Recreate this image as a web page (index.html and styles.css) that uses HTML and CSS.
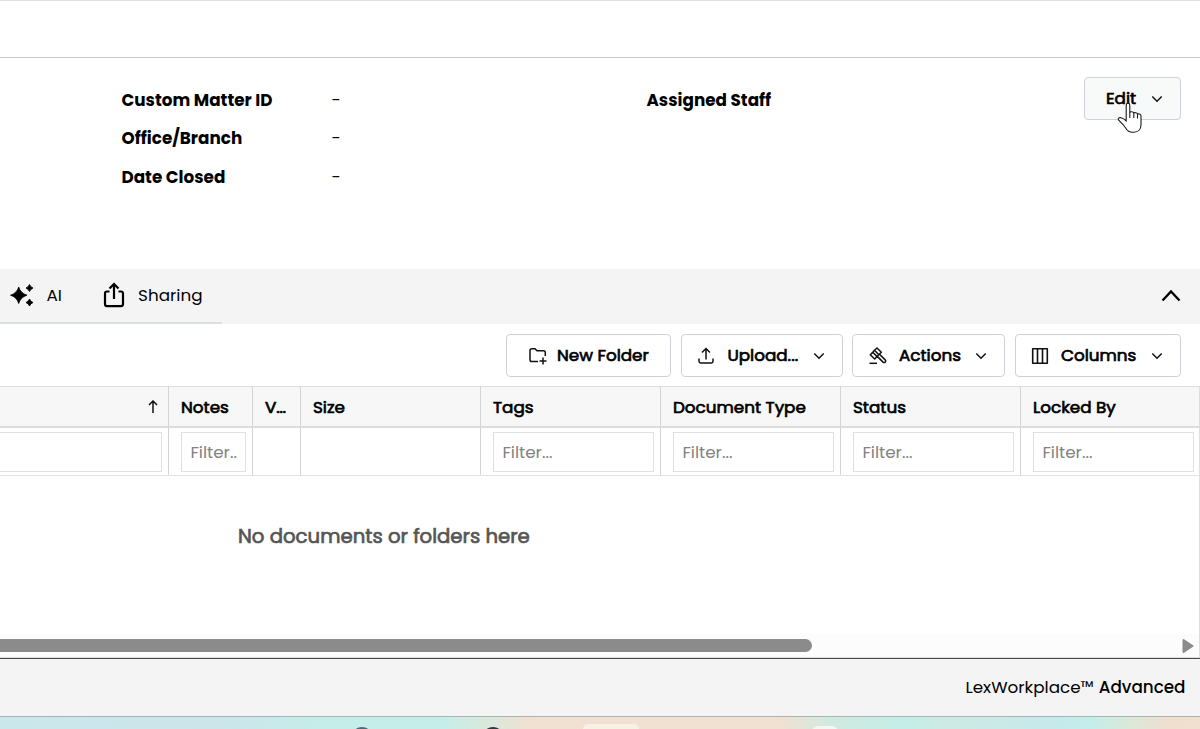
FILE: index.html
```html
<!DOCTYPE html>
<html lang="en">
<head>
<meta charset="utf-8">
<title>LexWorkplace</title>
<link rel="stylesheet" href="styles.css">
</head>
<body>
<svg class="defs" width="0" height="0">
  <symbol id="chev" viewBox="0 0 12 12"><path d="M1.3 3.500 6 8.200l4.700-4.700" fill="none" stroke="#111" stroke-width="1.500"/></symbol>
</svg>
<div class="topbar"></div>
<section class="details">
  <dl class="fields">
    <dt>Custom Matter ID</dt><dd>-</dd>
    <dt>Office/Branch</dt><dd>-</dd>
    <dt>Date Closed</dt><dd>-</dd>
  </dl>
  <div class="staff">Assigned Staff</div>
  <button class="btn edit"><span>Edit</span><svg class="chev" width="12" height="12"><use href="#chev"/></svg></button>
  <svg class="cursor" width="26" height="34" viewBox="0 0 26 34"><path d="M9.2 20V5.200c0-1.100.7-1.900 1.800-1.900s1.800.8 1.800 1.900v7.300c.1-1 3.600-1.300 4 .6.700-.8 3.200-.6 3.700 1 .9-.6 3.500-.1 3.500 2v8.400c0 5-3 7.700-7 7.700h-1.500c-3.200 0-5.200-1.300-6.700-4L6 24.500 1.500 20c-.8-1.500.5-2.700 2.400-2.300 2 .4 3.700 1.500 5.300 3.200z" fill="#fff" stroke="#181818" stroke-width="1.100"/><path d="M12.800 12v6M16.800 13.500V18M20.500 14.300V18.500" fill="none" stroke="#181818" stroke-width="1.100"/></svg>
</section>
<nav class="tabs">
  <div class="tablist">
    <svg width="24" height="24" viewBox="0 0 24 24"><path d="M8.700 4Q10.500 10.200 17 12.200 10.500 14.200 8.700 20.500 6.900 14.200.5 12.200 6.900 10.200 8.700 4ZM19.500 1.500q1 2.500 3.500 3.500-2.500 1-3.500 3.500-1-2.500-3.500-3.500 2.500-1 3.500-3.500ZM19.500 16q1 2.500 3.500 3.500-2.500 1-3.500 3.500-1-2.500-3.500-3.500 2.500-1 3.500-3.500Z" fill="#000" stroke="#000" stroke-width=".8" stroke-linejoin="round"/></svg>
    <span class="t-ai">AI</span>
    <svg class="i-share" width="22" height="26" viewBox="0 0 22 26"><path d="M6.500 9.500H4Q2 9.500 2 11.500v10.500q0 2.200 2 2.200h14q2 0 2-2.200V11.500q0-2-2-2h-2.500M11 17V3M6.500 6.500 11 2l4.500 4.500" fill="none" stroke="#000" stroke-width="2.200"/></svg>
    <span class="t-sharing">Sharing</span>
  </div>
  <svg class="collapse" width="20" height="14" viewBox="0 0 20 14"><path d="m1.500 11.500 8.500-9 8.500 9" fill="none" stroke="#000" stroke-width="2.300"/></svg>
</nav>
<div class="toolbar">
  <button class="btn b-new"><svg width="18" height="18" viewBox="0 0 18 18"><path d="M9 14.500H2.800Q1 14.500 1 12.700V3.500Q1 1.800 2.800 1.800H6l2 2h6.500q1.800 0 1.800 1.800v3.500M14 10.500v7M10.500 14h7" fill="none" stroke="#111" stroke-width="1.500"/></svg><span>New Folder</span></button>
  <button class="btn b-up"><svg width="16" height="18" viewBox="0 0 16 18"><path d="M1 11.500v2.700q0 1.700 1.700 1.700h10.600q1.700 0 1.700-1.700v-2.700M8 12.500V2M4 5.500l4-4 4 4" fill="none" stroke="#111" stroke-width="1.500"/></svg><span>Upload...</span><svg class="chev" width="12" height="12"><use href="#chev"/></svg></button>
  <button class="btn b-act"><svg width="18" height="18" viewBox="0 0 18 18"><g fill="none" stroke="#111" stroke-width="1.500" stroke-linejoin="round"><path d="M.5 16.300h7.500"/><path d="m5.500 3.300 2.500-2.300 4.300 4.200-2.500 2.500zM1.300 7.700l2.400-2.400 4.400 4.300-2.400 2.400zM5.500 3.300 3.700 5.300M9.800 7.700 8.100 9.600M10.500 7.200l5.700 5.700q1 1.200 0 2.200-1 .9-2.200 0L8.300 9.400"/></g></svg><span>Actions</span><svg class="chev" width="12" height="12"><use href="#chev"/></svg></button>
  <button class="btn b-col"><svg width="18" height="18" viewBox="0 0 18 18"><path d="M1.700 1.700h14.600v14.600H1.700zM6.500 1.700v14.600M11.500 1.700v14.600" fill="none" stroke="#111" stroke-width="1.600" stroke-linejoin="round"/></svg><span>Columns</span><svg class="chev" width="12" height="12"><use href="#chev"/></svg></button>
</div>
<div class="grid">
  <div class="row head">
    <div class="sort"><svg width="12" height="14" viewBox="0 0 12 14"><path d="M6 13V1.500M2 5l4-4 4 4" fill="none" stroke="#111" stroke-width="1.500"/></svg></div>
    <div><span>Notes</span></div><div><span>V…</span></div><div><span>Size</span></div><div><span>Tags</span></div><div><span>Document Type</span></div><div><span>Status</span></div><div><span>Locked By</span></div>
  </div>
  <div class="row filters">
    <div class="first"><span class="input"></span></div><div><span class="input">Filter..</span></div><div></div><div></div>
    <div><span class="input">Filter...</span></div><div><span class="input">Filter...</span></div><div><span class="input">Filter...</span></div><div><span class="input">Filter...</span></div>
  </div>
  <div class="empty">No documents or folders here</div>
  <div class="scroll"><div class="thumb"></div><svg width="12" height="14" viewBox="0 0 12 14"><path d="M1.500 1 10.500 7l-9 6z" fill="#8b8b8b" stroke="#8b8b8b" stroke-width="2" stroke-linejoin="round"/></svg></div>
</div>
<footer class="footer"><span>LexWorkplace™</span><span class="t-adv">Advanced</span></footer>
<div class="taskbar"><i class="app a1"></i><i class="app a2"></i><i class="app a3"></i><i class="app a4"></i></div>
</body>
</html>
```
FILE: styles.css
```css
* { box-sizing: border-box; }
body { margin: 0; width: 1200px; height: 729px; overflow: hidden; background: #fff; color: #000; font: 16.8px/24px Poppins, Inter, sans-serif; display: flex; flex-direction: column; }
.defs { position: absolute; }
svg { flex: none; display: block; }
span { white-space: nowrap; }
.topbar { height: 58px; border-top: 1px solid #e0e0e0; border-bottom: 1px solid #c9c9c9; }
.details { position: relative; height: 211px; padding: 19px 19px 0 121.5px; display: flex; align-items: flex-start; }
.fields { margin: 4px 0 0; width: 525px; display: grid; grid-template: 38px 39px 38px / 210px 1fr; line-height: 38px; }
dt, .staff { font-weight: 700; font-size: 16.8px; line-height: 39px; }
dd { margin: 0; line-height: 38px; }
.staff { margin-top: 4px; }
.btn { height: 43px; margin: 0; padding: 0; border: 1px solid #ced2d8; border-radius: 4px; background: #fff; color: #000; font: 400 16.8px/24px Poppins, Inter, sans-serif; -webkit-text-stroke: .7px #000; display: flex; align-items: center; }
.btn span { padding-bottom: 2px; }
.btn .chev { margin-left: auto; }
.edit { width: 97px; margin-left: auto; background: #f8faf9; padding: 0 17px 0 21px; }
.cursor { position: absolute; left: 1117px; top: 42px; }
.tabs { height: 55px; background: #f4f4f4; display: flex; justify-content: space-between; align-items: flex-start; padding-right: 19px; }
.tablist { width: 222px; height: 55px; border-bottom: 2px solid #dcdfe3; display: flex; align-items: center; padding: 0 0 1px 10px; }
.tablist span { padding-bottom: 1px; }
.t-ai { margin-left: 12.5px; }
.i-share { margin-left: auto; margin-right: 13px; }
.t-sharing { margin-right: 19.5px; }
.collapse { margin-top: 20px; }
.toolbar { height: 62px; padding: 10px 19px 0 0; display: flex; justify-content: flex-end; gap: 10px; }
.b-new { width: 165px; padding: 0 0 0 22px; gap: 10px; }
.b-up { width: 162px; padding: 0 17.500px 0 16px; gap: 13.4px; }
.b-act { width: 153px; padding: 0 17px 0 16px; gap: 12px; margin-left: -1px; }
.b-col { width: 166px; padding: 0 17px 0 15px; gap: 12px; }
.grid { height: 272px; border: solid #dedede; border-width: 1px 1px 1px 0; }
.row { display: grid; grid-template-columns: 169px 84px 48px 180px 180px 180px 180px 178px; }
.row > div { border-right: 1px solid #d3d3d3; padding-left: 12px; display: flex; align-items: center; min-width: 0; }
.row > div:last-child { border-right: 0; }
.head { height: 41px; background: #f7f7f7; border-bottom: 2px solid #dcdcdc; -webkit-text-stroke: .7px #000; }
.head span { padding-top: 1px; }
.head .sort { justify-content: flex-end; padding-right: 9.5px; }
.filters { height: 48px; border-bottom: 1px solid #e2e2e2; }
.filters > div { padding-right: 6px; }
.filters > div:last-child { padding-right: 5px; }
.filters > .first { padding-left: 0; }
.input { width: 100%; height: 40px; border: 1px solid #e0e0e0; padding-left: 8.4px; line-height: 39px; color: #828282; overflow: hidden; }
.first .input { border-left: 0; }
.empty { height: 158px; padding: 45px 0 0 238px; font-size: 19.7px; line-height: 30px; color: #555; -webkit-text-stroke: .7px #555; }
.scroll { height: 23px; background: #fcfcfc; display: flex; align-items: center; justify-content: space-between; padding-right: 5px; }
.thumb { width: 812px; height: 13px; border-radius: 0 7px 7px 0; background: #8b8b8b; }
.footer { height: 59px; border-top: 1px solid #4b494c; border-bottom: 1px solid #a9b2b4; background: #f4f4f4; display: flex; justify-content: flex-end; align-items: center; gap: 5px; padding: 0 14.500px 2px 0; }
.t-adv { font-weight: 500; }
.taskbar { position: relative; height: 12px; overflow: hidden; background: linear-gradient(90deg, #cae7ec 0, #cce5eb 220px, #c5ede9 320px, #c5eeea 440px, #dbe8da 490px, #f0e1d2 530px, #f0e1d2 780px, #d1eadf 830px, #c5eee8 900px, #cdeae3 950px, #c7e9ec 1050px, #c4eeea 1090px, #dce8d9 1130px, #f0dfcf 1170px, #f0e0d0 1200px); }
.app { position: absolute; display: block; }
.a1 { left: 352px; top: 10px; width: 20px; height: 18px; border-radius: 50%; background: #536777; }
.a2 { left: 483px; top: 10px; width: 20px; height: 18px; border-radius: 50%; background: #34363b; }
.a3 { left: 583px; top: 7px; width: 56px; height: 16px; border-radius: 5px; background: #f8f1e5; }
.a4 { left: 812px; top: 9px; width: 26px; height: 16px; border-radius: 6px; background: #f4f7f4; }
```
